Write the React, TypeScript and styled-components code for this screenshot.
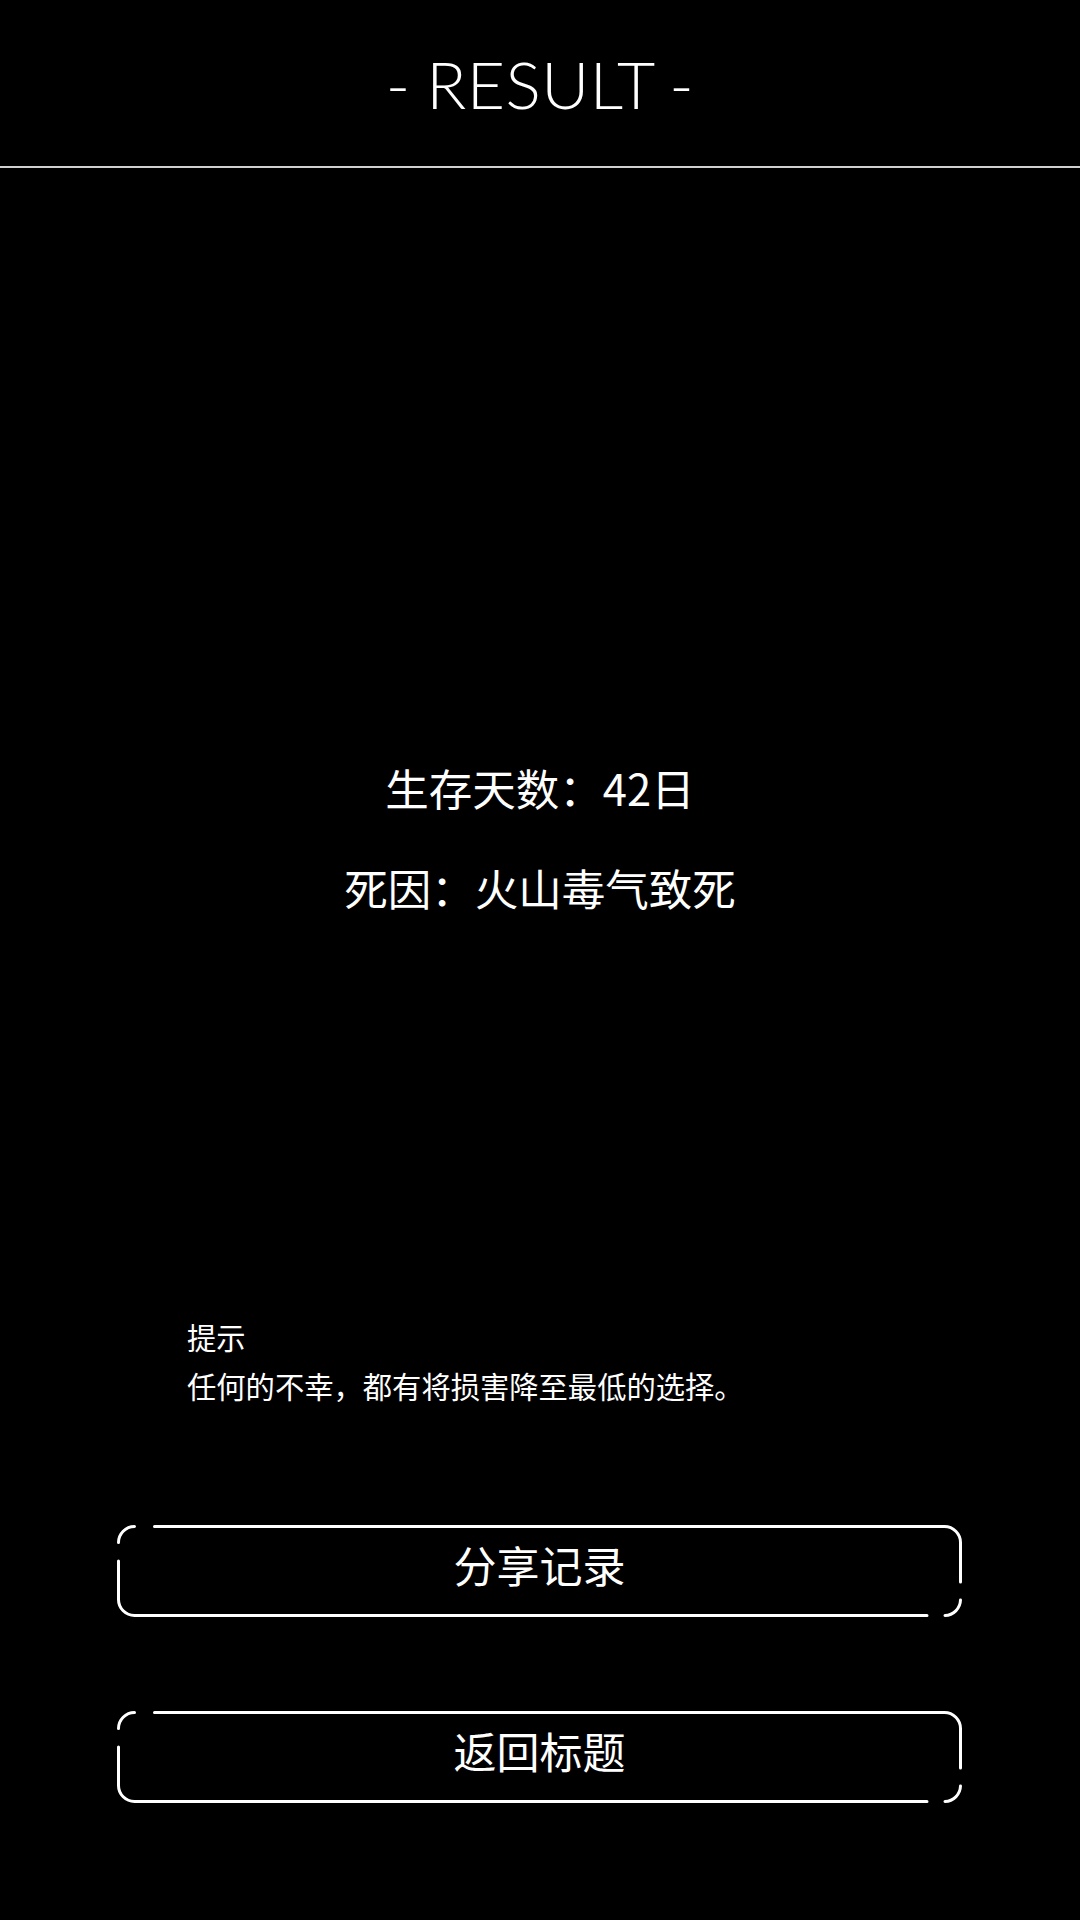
import {FC} from 'react';
import styled, {createGlobalStyle} from 'styled-components';

const GlobalStyle = createGlobalStyle`
    html, body {
        margin: 0;
        padding: 0;
        background: #000;
    }
    #root {
        min-height: 1920px;
    }
`

const Screen = styled.div`
    width: 1080px;
    height: 1920px;
    background: #000;
    color: #fff;
    display: flex;
    flex-direction: column;
    font-family: "Noto Sans CJK SC", "Noto Sans", sans-serif;
    overflow: hidden;
`

const Header = styled.header`
    height: 168px;
    border-bottom: 2px solid #cfcfcf;
    display: flex;
    justify-content: center;
    padding-top: 42px;
    box-sizing: border-box;
`

const Title = styled.h1`
    margin: 0;
    font-family: Lato, "Open Sans", sans-serif;
    font-weight: 300;
    font-size: 66px;
    line-height: 84px;
    letter-spacing: 0.5px;
    word-spacing: -3px;
    color: #fff;
`

const Stats = styled.div`
    margin-top: 570px;
    display: flex;
    flex-direction: column;
    align-items: center;
`

const StatLine = styled.p`
    margin: 0;
    font-size: 43.5px;
    line-height: 100px;
    font-weight: 400;
    white-space: nowrap;
`

const Hint = styled.div`
    margin-top: 374px;
    padding-left: 187px;
    font-size: 29.3px;
    line-height: 49px;
`

const HintLine = styled.p`
    margin: 0;
    white-space: nowrap;
`

const Actions = styled.div`
    margin-top: 115px;
    padding-left: 117px;
    display: flex;
    flex-direction: column;
    gap: 94px;
`

const FrameButton = styled.button`
    position: relative;
    width: 845px;
    height: 92px;
    padding: 0 0 14px;
    border: none;
    background: transparent;
    color: #fff;
    font-family: "Noto Sans CJK SC", "Noto Sans", sans-serif;
    font-size: 43px;
    display: flex;
    align-items: center;
    justify-content: center;
    cursor: pointer;
    box-sizing: border-box;
`

const Frame = styled.svg`
    position: absolute;
    inset: 0;
    pointer-events: none;
`

// broken rounded outline: a loose arc on the top-left and bottom-right corners
const ButtonFrame: FC = () => (
    <Frame width="845" height="92" viewBox="0 0 845 92" fill="none">
        <g stroke="#fff" strokeWidth="3" strokeLinecap="round">
            <path d="M1.5 17.5 A16 16 0 0 1 17.5 1.5"/>
            <path d="M37.5 1.5 H827.5 A16 16 0 0 1 843.5 17.5 V57"/>
            <path d="M843.5 75 A16 16 0 0 1 828 90.5"/>
            <path d="M810 90.5 H17.5 A16 16 0 0 1 1.5 74.5 V36"/>
        </g>
    </Frame>
)

const ActionButton: FC<{label: string}> = ({label}) => (
    <FrameButton>
        <ButtonFrame/>
        {label}
    </FrameButton>
)

export default function App() {
    return (
        <>
            <GlobalStyle/>
            <Screen>
                <Header>
                    <Title>- RESULT -</Title>
                </Header>
                <Stats>
                    <StatLine>生存天数：42日</StatLine>
                    <StatLine>死因：火山毒气致死</StatLine>
                </Stats>
                <Hint>
                    <HintLine>提示</HintLine>
                    <HintLine>任何的不幸，都有将损害降至最低的选择。</HintLine>
                </Hint>
                <Actions>
                    <ActionButton label="分享记录"/>
                    <ActionButton label="返回标题"/>
                </Actions>
            </Screen>
        </>
    )
}
